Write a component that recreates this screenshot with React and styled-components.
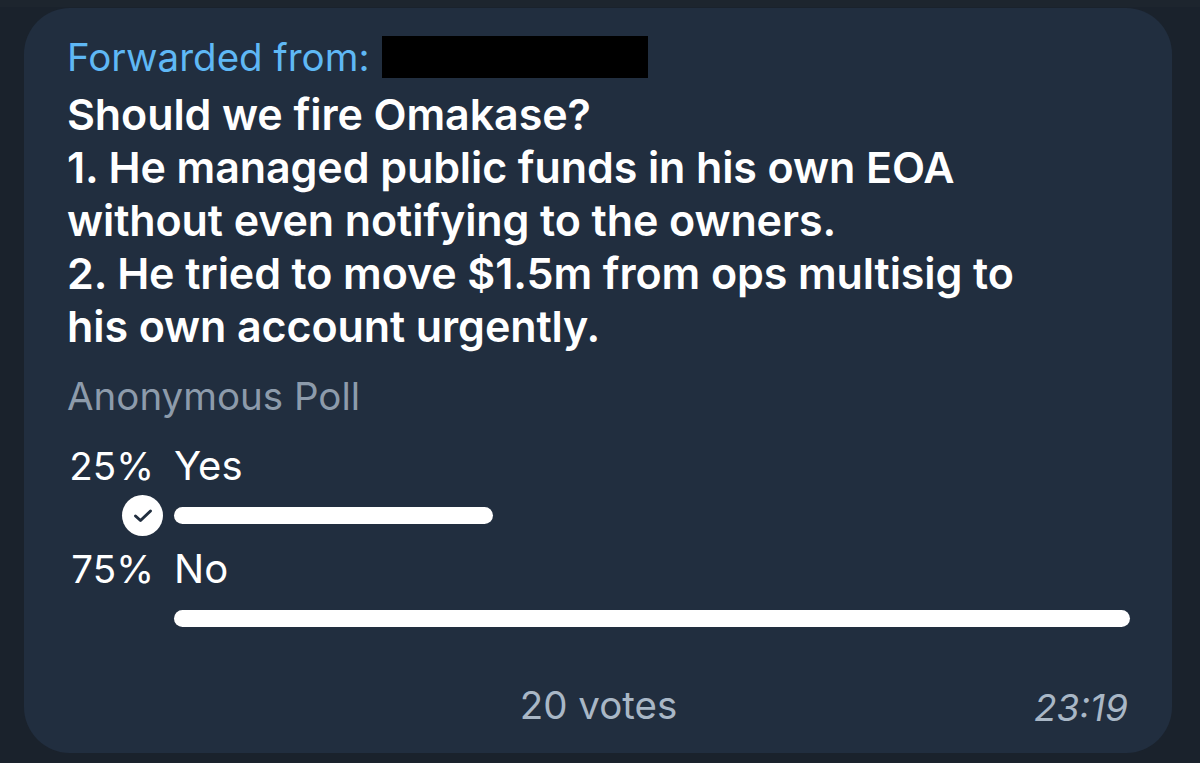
import React from 'react';
import styled, { createGlobalStyle } from 'styled-components';

const GlobalStyle = createGlobalStyle`
    html, body {
        margin: 0;
        padding: 0;
        background: #1a222c;
    }
    body {
        font-family: Inter, "Noto Sans", sans-serif;
    }
`;

const Page = styled.div`
    width: 1200px;
    height: 763px;
    box-sizing: border-box;
    padding: 8px 28px 10px 24px;
    background: linear-gradient(#1d252e 0, #1d252e 7px, #1a222c 7px);
`;

const Bubble = styled.div`
    height: 100%;
    box-sizing: border-box;
    background: #212e3f;
    border-radius: 46px;
    padding: 27px 42px 0 43px;
    display: flex;
    flex-direction: column;
`;

const Forwarded = styled.div`
    display: flex;
    align-items: center;
    gap: 12px;
    color: #5fb8f5;
    font-size: 38.5px;
    line-height: 44px;
`;

const Redacted = styled.span`
    display: inline-block;
    width: 266px;
    height: 42px;
    background: #000;
`;

const Question = styled.div`
    margin-top: 9px;
    color: #ffffff;
    font-size: 43px;
    font-weight: 600;
    line-height: 53px;
    letter-spacing: -0.1px;
    white-space: pre-line;
`;

const PollType = styled.div`
    margin-top: 21px;
    color: #8d9bab;
    font-size: 38.5px;
    line-height: 44px;
`;

const Options = styled.div`
    margin-top: 26px;
    display: flex;
    flex-direction: column;
`;

const Option = styled.div`
    display: grid;
    grid-template-columns: 87px 1fr;
    column-gap: 20px;
    row-gap: 10px;
    height: 103px;
    align-content: start;
`;

const Percent = styled.div`
    color: #fff;
    font-size: 38.5px;
    line-height: 44px;
    text-align: right;
`;

const Label = styled.div`
    color: #fff;
    font-size: 40px;
    line-height: 44px;
`;

const CheckCell = styled.div`
    display: flex;
    justify-content: flex-end;
    align-items: center;
    height: 34px;
`;

const CheckCircle = styled.div`
    width: 41px;
    height: 41px;
    flex-shrink: 0;
    margin-right: -9px;
    border-radius: 50%;
    background: #fff;
    display: flex;
    align-items: center;
    justify-content: center;

    svg {
        flex-shrink: 0;
        display: block;
    }
`;

const BarCell = styled.div`
    display: flex;
    align-items: center;
    height: 34px;
`;

const Bar = styled.div`
    height: 17px;
    border-radius: 9px;
    background: #fff;
`;

const Footer = styled.div`
    margin-top: auto;
    height: 96px;
    display: flex;
    align-items: flex-start;
    position: relative;
`;

const Votes = styled.div`
    flex: 1;
    text-align: center;
    color: #a9b7c6;
    font-size: 38.5px;
    line-height: 44px;
    margin-top: 26px;
`;

const Time = styled.div`
    position: absolute;
    right: 2px;
    top: 31px;
    color: #a9b7c6;
    font-size: 37px;
    font-style: italic;
    line-height: 40px;
`;

const options = [
    { percent: 25, label: 'Yes', chosen: true },
    { percent: 75, label: 'No', chosen: false },
];

const Check = () => (
    <svg width="24" height="24" viewBox="0 0 24 24">
        <path d="M4.5 13 L9.5 17.5 L19.5 8" fill="none" stroke="#212e3f" strokeWidth="3" strokeLinecap="round" strokeLinejoin="round" />
    </svg>
);

const App = () => {
    return (
        <Page>
            <GlobalStyle />
            <Bubble>
                <Forwarded>Forwarded from: <Redacted /></Forwarded>
                <Question>
                    {'Should we fire Omakase?\n1. He managed public funds in his own EOA\nwithout even notifying to the owners.\n2. He tried to move $1.5m from ops multisig to\nhis own account urgently.'}
                </Question>
                <PollType>Anonymous Poll</PollType>
                <Options>
                    {options.map(o => (
                        <Option key={o.label}>
                            <Percent>{o.percent}%</Percent>
                            <Label>{o.label}</Label>
                            <CheckCell>{o.chosen && <CheckCircle><Check /></CheckCircle>}</CheckCell>
                            <BarCell>
                                <Bar style={{ width: (o.percent / 75 * 100) + '%' }} />
                            </BarCell>
                        </Option>
                    ))}
                </Options>
                <Footer>
                    <Votes>20 votes</Votes>
                    <Time>23:19</Time>
                </Footer>
            </Bubble>
        </Page>
    );
};

export default App;
